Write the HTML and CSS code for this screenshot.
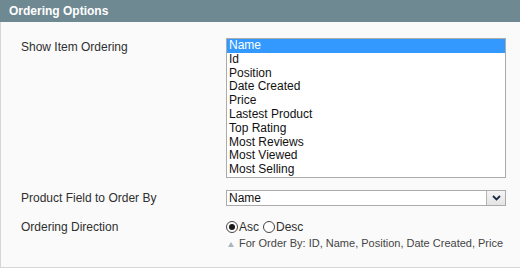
FILE: index.html
```html
<!DOCTYPE html>
<html lang="en">
<head>
	<meta charset="UTF-8">
	<title>Ordering Options</title>
	<link rel="stylesheet" href="styles.css">
</head>
<body>

	<div class="entry-edit">
		<div class="entry-edit-head">
			<h4>Ordering Options</h4>
		</div>

		<div class="fieldset">
			<div class="form-list">

				<!-- 多选列表 -->
				<div class="label first">Show Item Ordering</div>
				<div class="value">
					<div class="multiselect" role="listbox" aria-multiselectable="true">
						<div class="option selected">Name</div>
						<div class="option">Id</div>
						<div class="option">Position</div>
						<div class="option">Date Created</div>
						<div class="option">Price</div>
						<div class="option">Lastest Product</div>
						<div class="option">Top Rating</div>
						<div class="option">Most Reviews</div>
						<div class="option">Most Viewed</div>
						<div class="option">Most Selling</div>
					</div>
				</div>

				<!-- 下拉框 -->
				<div class="label">Product Field to Order By</div>
				<div class="value">
					<div class="select" role="combobox">
						<span class="select-text">Name</span>
						<span class="select-btn">
							<svg width="9" height="6" viewBox="0 0 9 6"><path d="M1 1 L4.5 4.5 L8 1" fill="none" stroke="#1d2a44" stroke-width="1.8"/></svg>
						</span>
					</div>
				</div>

				<!-- 单选 -->
				<div class="label last">Ordering Direction</div>
				<div class="value last">
					<div class="radios">
						<span class="radio checked"></span><span class="radio-label">Asc</span>
						<span class="radio"></span><span class="radio-label">Desc</span>
					</div>
					<p class="note"><span class="note-arrow"></span>For Order By: ID, Name, Position, Date Created, Price</p>
				</div>

			</div>
		</div>
	</div>

</body>
</html>
```
FILE: styles.css
```css
/* 整体 */
body {
	margin: 0;
	font: 12px "Liberation Sans", Arial, sans-serif;
	color: #2f2f2f;
	background-color: #fff;
}

/* 标题栏 */
.entry-edit-head {
	background-color: #6f8992;
	height: 22px;
	padding: 2px 9px 0;
	box-sizing: border-box;
}
.entry-edit-head h4 {
	margin: 0;
	font-size: 12px;
	line-height: 18px;
	font-weight: bold;
	color: #fff;
}

/* 内容区 */
.fieldset {
	background-color: #fafafa;
	border-left: 1px solid #d6d6d6;
	border-bottom: 1px solid #d6d6d6;
	padding: 16px 0 16px 20px;
}

.form-list {
	display: grid;
	grid-template-columns: 205px 280px;
	row-gap: 12px;
}

.label {
	line-height: 16px;
}
.label.first {
	margin-top: 1px;
}
.label.last, .value.last {
	margin-top: 1px;
}

/* 多选列表 */
.multiselect {
	width: 280px;
	height: 140px;
	box-sizing: border-box;
	border: 1px solid #ababab;
	background-color: #fff;
	overflow: hidden;
	color: #111;
}
.option {
	padding: 0 2px;
	line-height: 13.8px;
	white-space: nowrap;
}
.option.selected {
	background-color: #3399ff;
	color: #fff;
}

/* 下拉框 */
.select {
	display: flex;
	width: 280px;
	height: 16px;
	box-sizing: border-box;
	border: 1px solid #ababab;
	background-color: #fff;
	color: #111;
}
.select-text {
	flex: 1;
	padding: 0 2px;
	line-height: 14px;
}
.select-btn {
	width: 18px;
	display: flex;
	align-items: center;
	justify-content: center;
	background: linear-gradient(#f4f4f4, #e4e4e4);
	border: 1px solid #b5b5b5;
	border-right: 0;
	border-top: 0;
	border-bottom: 0;
}

/* 单选 */
.radios {
	display: flex;
	align-items: center;
	height: 16px;
	color: #2f2f2f;
}
.radio {
	width: 12px;
	height: 12px;
	box-sizing: border-box;
	border: 1px solid #444;
	border-radius: 50%;
	background-color: #fff;
	position: relative;
}
.radio.checked:after {
	content: "";
	position: absolute;
	left: 2px;
	top: 2px;
	width: 6px;
	height: 6px;
	border-radius: 50%;
	background-color: #1a1a1a;
}
.radio-label {
	margin: 0 4px 0 1px;
}

/* 提示 */
.note {
	margin: 0;
	font-size: 11px;
	line-height: 16px;
	color: #444;
	display: flex;
	align-items: center;
}
.note-arrow {
	width: 0;
	height: 0;
	border-left: 3px solid transparent;
	border-right: 3px solid transparent;
	border-bottom: 5px solid #a8b6bd;
	margin: 2px 5px 0 2px;
}
```
